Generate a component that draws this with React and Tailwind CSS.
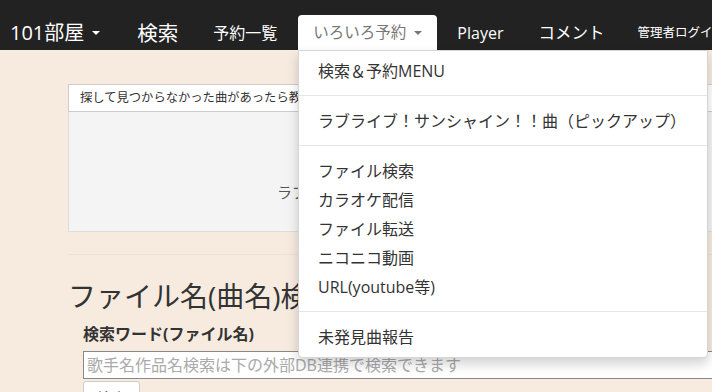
import React from "react";

const font = { fontFamily: '"Open Sans", "Noto Sans CJK JP", sans-serif' };

function Caret({ color = "border-t-white" }) {
  return (
    <span
      className={`inline-block w-0 h-0 border-t-[4px] border-x-[4px] border-x-transparent ${color} ml-[8px] align-middle`}
    />
  );
}

function Item({ children }) {
  return (
    <div className="h-[29px] flex items-center pl-[19px] text-[16px] text-[#333] whitespace-nowrap">
      {children}
    </div>
  );
}

function Divider() {
  return <div className="h-px bg-[#e5e5e5] my-[10px]" />;
}

export default function App() {
  return (
    <div
      className="relative w-[712px] h-[392px] overflow-hidden bg-[#f7ebe0]"
      style={font}
    >
      {/* navbar */}
      <div className="h-[50px] bg-[#222222] flex items-end whitespace-nowrap">
        <div className="h-[34px] flex items-center ml-[10px] text-white text-[20px]">
          101部屋<Caret />
        </div>
        <div className="h-[34px] flex items-center ml-[37px] text-white text-[20.5px]">
          検索
        </div>
        <div className="h-[34px] flex items-center ml-[35px] text-white text-[16px]">
          予約一覧
        </div>
        <div className="h-[35px] w-[139px] shrink-0 flex items-center ml-[21px] bg-white rounded-t-[4px] pl-[15px] text-[#777] text-[15.5px]">
          いろいろ予約<Caret color="border-t-[#777]" />
        </div>
        <div className="h-[34px] flex items-center ml-[20px] text-white text-[16px]">
          Player
        </div>
        <div className="h-[34px] flex items-center ml-[35px] text-white text-[16.5px]">
          コメント
        </div>
        <div className="h-[34px] flex items-center ml-[33px] text-white text-[12.5px]">
          管理者ログイン
        </div>
      </div>

      {/* main content */}
      <div className="ml-[68px] w-[700px]">
        <div className="mt-[34px] h-[28px] bg-white border border-[#cccccc] flex items-center pl-[11px] text-[12.3px] text-[#333] whitespace-nowrap">
          探して見つからなかった曲があったら教えてください
        </div>
        <div className="h-[120px] bg-[#f4f4f4] border border-t-0 border-[#dddddd] flex items-center pl-[208px] pt-[42px] text-[15px] text-[#555] whitespace-nowrap">
          ラブライブ！サンシャイン！！曲のピックアップ
        </div>
        <div className="mt-[22px] h-px bg-[#eee0d3]" />
        <div className="mt-[23px] text-[28px] leading-[36px] text-[#333] whitespace-nowrap">
          ファイル名(曲名)検索
        </div>
        <div className="pl-[15px] mt-[10px] text-[16px] font-bold text-[#333] leading-[20px] whitespace-nowrap">
          検索ワード(ファイル名)
        </div>
        <div className="ml-[15px] mt-[7px] h-[28px] bg-white border border-[#888] flex items-center pl-[3px] text-[16px] text-[#aaa] whitespace-nowrap">
          歌手名作品名検索は下の外部DB連携で検索できます
        </div>
        <div className="ml-[15px] mt-[2px] w-[57px] h-[30px] bg-white border border-[#ccc] rounded-[3px] flex items-start justify-center pt-[5px] text-[15px] text-[#333]">
          検索
        </div>
      </div>

      {/* dropdown */}
      <div className="absolute left-[298px] top-[50px] w-[410px] bg-white border border-[#d5d5d5] rounded-b-[4px] shadow-[0_6px_12px_rgba(0,0,0,0.175)] pt-[5px] pb-[6px]">
        <Item>検索＆予約MENU</Item>
        <Divider />
        <Item>ラブライブ！サンシャイン！！曲（ピックアップ）</Item>
        <Divider />
        <Item>ファイル検索</Item>
        <Item>カラオケ配信</Item>
        <Item>ファイル転送</Item>
        <Item>ニコニコ動画</Item>
        <Item>URL(youtube等)</Item>
        <Divider />
        <Item>未発見曲報告</Item>
      </div>
    </div>
  );
}
